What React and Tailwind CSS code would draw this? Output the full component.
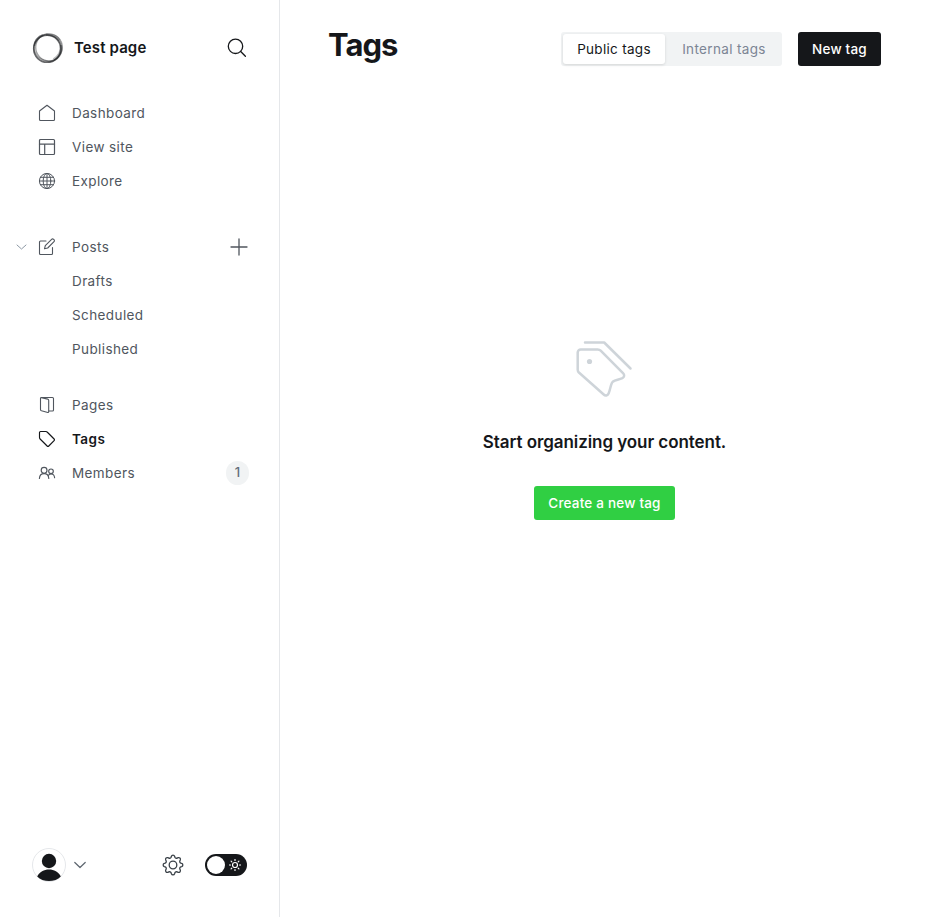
import React from "react";

function Icon({ size = 18, className = "", children, sw = 1 }) {
  return (
    <svg
      width={size}
      height={size}
      viewBox={`0 0 ${size} ${size}`}
      fill="none"
      stroke="currentColor"
      strokeWidth={sw}
      strokeLinecap="round"
      strokeLinejoin="round"
      className={`shrink-0 ${className}`}
    >
      {children}
    </svg>
  );
}

const icons = {
  home: (
    <Icon sw={1.1}>
      <path d="M1.5 7 9 1.3 16.5 7v8.5a1 1 0 0 1-1 1h-13a1 1 0 0 1-1-1z" />
    </Icon>
  ),
  layout: (
    <Icon sw={1.2}>
      <rect x="1.5" y="1.5" width="15" height="15" rx="1" />
      <path d="M1.5 6.2h15M6.7 6.2v10.3" />
    </Icon>
  ),
  globe: (
    <Icon>
      <circle cx="9" cy="9" r="7.6" />
      <ellipse cx="9" cy="9" rx="3.8" ry="7.6" />
      <path d="M9 1.4v15.2M1.4 9h15.2M2.4 5.3h13.2M2.4 12.7h13.2" />
    </Icon>
  ),
  edit: (
    <Icon sw={1.1}>
      <path d="M8 3H2.5a1 1 0 0 0-1 1v11.5a1 1 0 0 0 1 1h11a1 1 0 0 0 1-1V9.500" />
      <path d="m9.700 10-3.200.8.8-3.200 6.300-6.300a1.400 1.400 0 0 1 2 0l.400.400a1.400 1.400 0 0 1 0 2z" />
    </Icon>
  ),
  pages: (
    <Icon sw={1.100}>
      <path d="M2.500 2.300c0-.5.400-.8.900-.7l6.300 1.500c.6.200 1 .7 1 1.300v11.400c0 .5-.4.8-.9.700l-6.300-1.700c-.6-.2-1-.7-1-1.300z" />
      <path d="M3.500 1.500h11a1 1 0 0 1 1 1v11.500a1 1 0 0 1-1 1h-3.600" />
    </Icon>
  ),
  tag: (
    <Icon sw={1.150}>
      <path d="M1.500 2.500a1 1 0 0 1 1-1H8a1.500 1.500 0 0 1 1.100.500l7 7a1.200 1.200 0 0 1 0 1.700l-5.300 5.300a1.200 1.200 0 0 1-1.700 0l-7-7a2 2 0 0 1-.6-1.400z" />
    </Icon>
  ),
  members: (
    <Icon sw={1.150}>
      <circle cx="6.100" cy="6.300" r="2.900" />
      <circle cx="13" cy="7.300" r="2.300" />
      <path d="M1.400 14.500c.2-3 2-4.900 4.700-4.900s4.500 1.900 4.700 4.900M10.600 11.200c.6-.8 1.400-1.200 2.500-1.200 2 0 3.300 1.400 3.500 3.700" />
    </Icon>
  ),
};

function NavItem({ icon, label, active, children }) {
  return (
    <a
      className={`flex h-[34px] items-center text-[13.5px] ${
        active ? "font-semibold tracking-[0.45px] text-[#15171a]" : "tracking-[0.4px] text-[#50565e]"
      }`}
    >
      <span className="mr-4 flex w-[18px]">{icon}</span>
      <span className="grow pb-px leading-5">{label}</span>
      {children}
    </a>
  );
}

function Sidebar() {
  return (
    <aside className="flex w-[280px] shrink-0 flex-col border-r border-[#e5e7ea]">
      <header className="mt-8 flex h-8 items-center px-8">
        <svg width="32" height="32" viewBox="0 0 32 32" fill="none" stroke="#15171a">
          <circle cx="15.200" cy="16.800" r="13.500" strokeWidth="1.600" strokeOpacity="0.650" />
          <ellipse cx="17" cy="15.300" rx="13.300" ry="13.500" strokeWidth="1.300" strokeOpacity="0.400" />
          <ellipse cx="15.800" cy="16" rx="14.200" ry="13.200" strokeWidth="1.400" strokeOpacity="0.400" transform="rotate(35 16 16)" />
          <path d="M14 2.800c6-.3 11 1.400 13.500 5.600M29 13c.5 6-2.500 11.500-7.500 14.500" strokeWidth="2.400" strokeOpacity="0.300" />
          <path d="M2.500 14c.5-5 3.500-9 8.500-11" strokeWidth="2" strokeOpacity="0.300" />
        </svg>
        <span className="ml-[10px] grow text-[15px] font-semibold tracking-[0.12px] text-[#15171a]">Test page</span>
        <Icon size={20} sw={1.300} className="text-[#15171a]">
          <circle cx="8.500" cy="8.300" r="7.200" />
          <path d="m13.700 13.500 4.700 4.700" />
        </Icon>
      </header>

      <nav className="mt-8 flex flex-col pl-[38px] pr-[31px]">
        <NavItem icon={icons.home} label="Dashboard" />
        <NavItem icon={icons.layout} label="View site" />
        <NavItem icon={icons.globe} label="Explore" />
      </nav>

      <nav className="mt-8 flex flex-col pl-4 pr-[31px]">
        <div className="flex items-center">
          <Icon size={12} className="mr-[10px] text-[#8d99a5]">
            <path d="m1 4 4.500 4L10 4" />
          </Icon>
          <div className="grow">
            <NavItem icon={icons.edit} label="Posts">
              <Icon sw={1.300}>
                <path d="M9 1v16M1 9h16" />
              </Icon>
            </NavItem>
          </div>
        </div>
        <div className="pl-[22px]">
          <NavItem label="Drafts" />
          <NavItem label="Scheduled" />
          <NavItem label="Published" />
        </div>
      </nav>

      <nav className="mt-[22px] flex flex-col pl-[38px] pr-[30px]">
        <NavItem icon={icons.pages} label="Pages" />
        <NavItem icon={icons.tag} label="Tags" active />
        <NavItem icon={icons.members} label="Members">
          <span className="flex h-6 w-[23px] items-center justify-center rounded-full bg-[#f1f3f4] text-[13px] font-medium tracking-normal text-[#626d79]">
            1
          </span>
        </NavItem>
      </nav>

      <footer className="mt-auto mb-[35px] flex h-[34px] items-center px-8">
        <svg width="34" height="34" viewBox="0 0 34 34">
          <circle cx="17" cy="17" r="16.500" fill="#fff" stroke="#e5e7ea" />
          <circle cx="17" cy="13" r="7.200" fill="#15171a" />
          <path d="M5.200 28.500C7.500 24 12 21.600 17 21.600S26.500 24 28.800 28.500C26 31.500 21.500 33 17 33S8 31.500 5.200 28.500z" fill="#15171a" />
        </svg>
        <Icon size={12} className="ml-2 text-[#5d666f]" sw={1.200}>
          <path d="m.8 3.500 5.200 5 5.200-5" />
        </Icon>
        <div className="grow" />
        <Icon size={22} sw={1.300} className="mr-[21px] text-[#394047]">
          <circle cx="11" cy="11" r="3.800" />
          <path d="M9.400 2.300a1.700 1.700 0 0 1 3.200 0l.3.900a1.700 1.700 0 0 0 2.300.9l.900-.4a1.700 1.700 0 0 1 2.200 2.200l-.4.900a1.700 1.700 0 0 0 .9 2.300l.9.300a1.700 1.700 0 0 1 0 3.200l-.9.300a1.700 1.700 0 0 0-.9 2.300l.4.900a1.700 1.700 0 0 1-2.200 2.200l-.9-.4a1.700 1.700 0 0 0-2.300.9l-.3.900a1.700 1.700 0 0 1-3.200 0l-.3-.9a1.700 1.700 0 0 0-2.300-.9l-.9.400a1.700 1.700 0 0 1-2.200-2.200l.4-.9a1.700 1.700 0 0 0-.9-2.300l-.9-.3a1.700 1.700 0 0 1 0-3.200l.9-.3a1.700 1.700 0 0 0 .9-2.300l-.4-.9a1.700 1.700 0 0 1 2.200-2.200l.9.400a1.700 1.700 0 0 0 2.300-.9z" />
        </Icon>
        <div className="flex h-[22px] w-[42px] items-center justify-between rounded-full bg-[#15171a] pl-[2px] pr-[6px]">
          <span className="size-[18px] rounded-full bg-white" />
          <Icon size={12} sw={1.200} className="text-white">
            <circle cx="6" cy="6" r="2.500" />
            <path d="M6 .5v1M6 10.500v1M.5 6h1M10.500 6h1M2.100 2.100l.7.700M9.200 9.200l.7.700M2.100 9.900l.7-.7M9.200 2.800l.7-.7" />
          </Icon>
        </div>
      </footer>
    </aside>
  );
}

export default function App() {
  return (
    <div className="flex h-[917px] w-[929px] overflow-hidden bg-white font-['Inter',sans-serif] text-[#15171a]">
      <Sidebar />
      <main className="flex grow flex-col">
        <header className="mt-8 flex h-[34px] items-center px-12">
          <h1 className="-mt-2 grow text-[31px] leading-[34px] font-bold tracking-[-1px]">Tags</h1>
          <div className="flex h-[34px] w-[221px] items-center rounded-[3px] bg-[#f1f3f4] p-[2px] text-[13.5px]">
            <button className="h-[30px] w-[102px] rounded-[3px] bg-white tracking-[0.3px] whitespace-nowrap shadow-[0_1px_3px_rgba(0,0,0,0.12)]">
              Public tags
            </button>
            <button className="h-[30px] grow pl-[3px] tracking-[0.35px] whitespace-nowrap text-[#7c8594]">Internal tags</button>
          </div>
          <button className="ml-4 h-[34px] w-[83px] rounded-[3px] bg-[#15171a] text-[13.5px] font-[550] tracking-[0.2px] whitespace-nowrap text-white">
            New tag
          </button>
        </header>

        <section className="mt-[269px] flex flex-col items-center">
          <svg
            width="64"
            height="64"
            viewBox="0 0 64 64"
            fill="none"
            stroke="#ced4d9"
            strokeWidth="2.5"
            strokeLinecap="round"
            strokeLinejoin="round"
          >
            <path d="M12 7.500h19.200L57.500 33.500" />
            <path d="M4.700 17.500a3 3 0 0 1 3-3h17c1.200 0 2.200.4 3 1.200l22.300 22.400c1.700 1.700 1.500 3.900-.6 5-3.500 1.700-7 1.900-9.400 3.500-2.300 1.700-2.300 7-4.400 11.900-.9 2.200-3.300 2.600-4.900 1L5.900 37.500a4 4 0 0 1-1.200-2.800z" />
            <circle cx="16.500" cy="26.500" r="2.600" fill="#ced4d9" stroke="none" />
          </svg>
          <h2 className="mt-[31px] text-[17px] leading-6 font-semibold tracking-[-0.07px]">Start organizing your content.</h2>
          <button className="mt-8 h-[34px] w-[141px] rounded-[3px] bg-[#30cf43] text-[13.5px] font-[550] tracking-[0.2px] whitespace-nowrap text-white">
            Create a new tag
          </button>
        </section>
      </main>
    </div>
  );
}
